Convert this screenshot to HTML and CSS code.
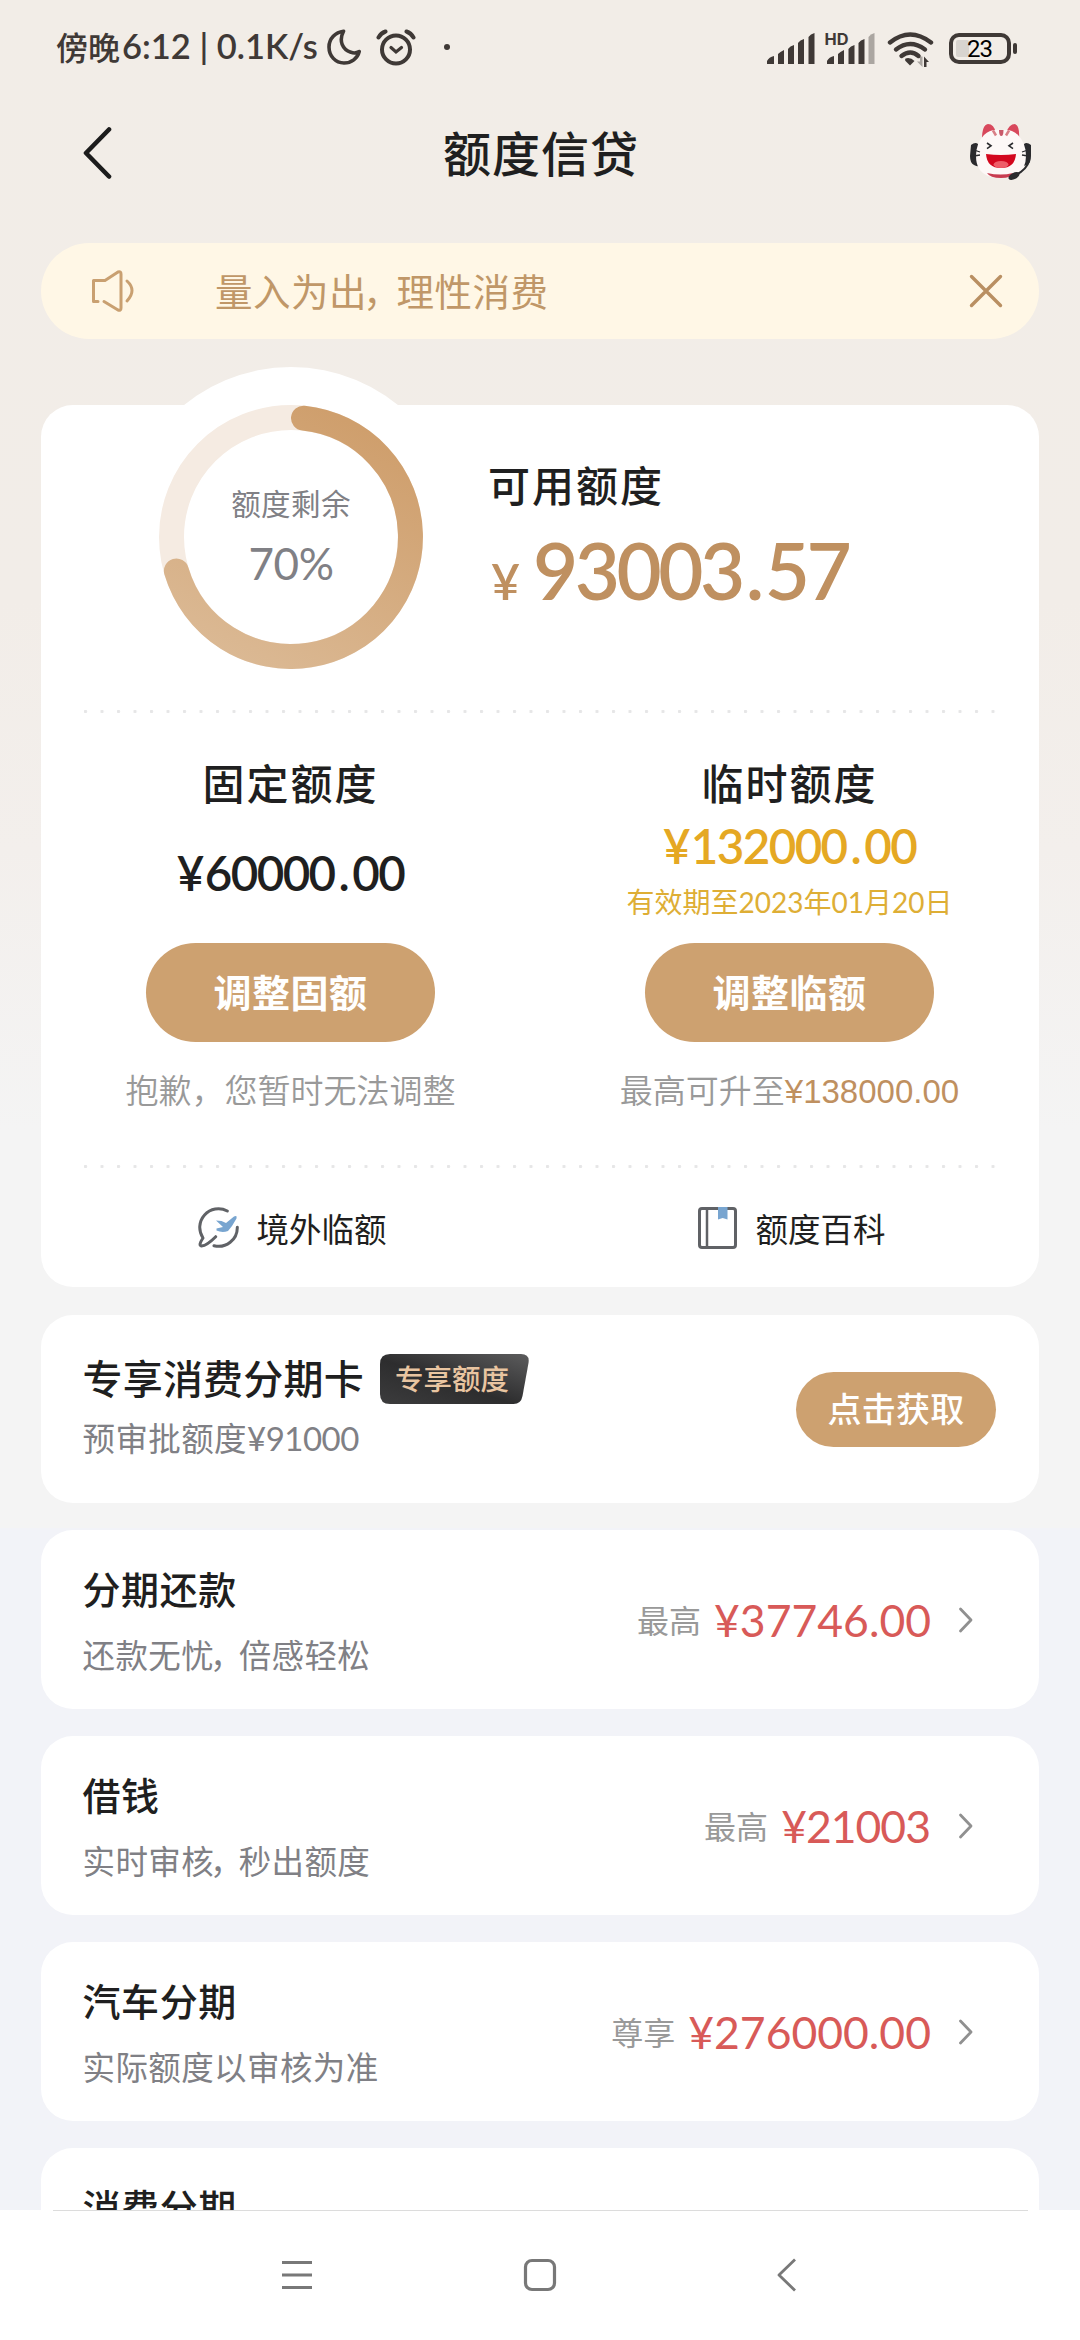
FILE: index.html
```html
<!DOCTYPE html>
<html lang="zh-CN">
<head>
<meta charset="utf-8">
<title>额度信贷</title>
<link rel="stylesheet" href="styles.css">
</head>
<body>
<div class="screen">
  <div class="statusbar">
    <span class="clock">傍晚<span class="lat">6:12 | 0.1K/s</span></span>
    <svg class="moon" width="34" height="36" viewBox="0 0 34 36"><path d="M16.500 2.200C8.500 3.200 2 9.600 2 18c0 9 6.500 16 15 16 7.400 0 13.600-4.600 15.200-11.400-3 1.700-6 1.700-8.400.6C15.500 20.500 11.500 12 16.500 2.200z" fill="none" stroke="#3f3936" stroke-width="3.600" stroke-linejoin="round"/></svg>
    <svg class="alarm" width="40" height="37" viewBox="0 0 40 37"><g fill="none" stroke="#3f3936" stroke-linecap="round"><circle cx="20" cy="20.500" r="14" stroke-width="4"/><path d="M2.500 8.500Q5 4 9.500 2.500M37.500 8.500Q35 4 30.500 2.500" stroke-width="4"/><path d="M15 18.500l5 4.500 5.500-4.500" stroke-width="3.200"/></g></svg>
    <span class="dot"></span>
    <svg class="signals" width="254" height="38" viewBox="0 0 254 38">
      <g fill="#3f3936">
        <path d="M0 34v-3q2-4 7-5v8zM11 34V24q2-2 6-4v14zM21 34V19q2-3 6-4v19zM31 34V13q2-3 6-4v25zM41.500 34V7q2-3 6-4v31z"/>
        <path d="M60 34v-3q2-4 7-5v8zM71 34V24q2-2 6-4v14zM81.500 34V19q2-3 6-4v19zM91.500 34V13q2-3 6-4v25z"/>
        <path d="M101.500 34V7q2-3 6-4v31z" fill="#aba6a1"/>
        <text x="57.500" y="14.500" class="hd" textLength="24" lengthAdjust="spacingAndGlyphs">HD</text>
        <path d="M138.500 28.500q5-1.500 9 2.500l-4.500 4.500-4.500-4.500q-1-1 0-2.500z"/>
        <path d="M157 37V26.500l5 5.500h-2.500v5z"/>
        <path d="M155.500 26.500V37l-5.500-5.500h3v-5z" fill="#aba6a1"/>
      </g>
      <g fill="none" stroke="#3f3936" stroke-width="4.400" stroke-linecap="round"><path d="M123 12.500q20-16 41 0"/><path d="M129 19.500q14-11 29 0"/><path d="M134.500 26q9-7 17 0"/></g>
      <rect x="189" y="10" width="13" height="17" rx="2" fill="#d8d4cf"/>
      <rect x="184" y="5" width="58" height="27" rx="8" fill="none" stroke="#3f3936" stroke-width="4"/>
      <rect x="246" y="13" width="4" height="11" rx="2" fill="#3f3936"/>
      <text x="200" y="26.500" class="pct" textLength="26">23</text>
    </svg>
  </div>

  <header class="topbar">
    <svg width="30" height="52" viewBox="0 0 30 52"><path d="M26 2.500L3 26l23 23.500" fill="none" stroke="#1c1c1c" stroke-width="4.600" stroke-linecap="round" stroke-linejoin="round"/></svg>
    <h1>额度信贷</h1>
    <svg class="mascot" width="64" height="58" viewBox="0 0 64 58">
      <path d="M2 22q6-5 9 2v13q2 9-6 5-4-2-4-9zM62 22q-6-5-9 2v13q-1 8 5 5 4-2 4-9z" fill="#2b2b2e"/>
      <path d="M13 16Q13 2 19 1q6 0 8 9zM37 10q3-9 9-9 5 2 4 15z" fill="#d8485c"/>
      <path d="M32 7q11-1 17 5 8 8 8 21 0 15-12 20-13 4-26 0Q7 48 7 33q0-13 8-21 6-6 17-5z" fill="#fdf8f7"/>
      <path d="M24 7.500l3 5M40 7.500l-3 5" stroke="#d97f86" stroke-width="2.500"/><path d="M30 7h4.500q0 6-2.200 6T30 7z" fill="#c9596a"/>
      <path d="M18 20l4 2.800-4 2.800M44 20l-4 2.800 4 2.800" fill="none" stroke="#2b2b2e" stroke-width="1.600"/>
      <path d="M5 27l6 2M5 33l6-1M59 27l-6 2M59 33l-6-1" stroke="#2b2b2e" stroke-width="1.300"/>
      <path d="M17 31q15 2 30 0-1 14-15 14T17 31z" fill="#d3071e"/><ellipse cx="32" cy="41.500" rx="7.500" ry="3.500" fill="#ee5d68"/>
      <path d="M18 50q14 3 26 0-1 5-12 5t-14-5z" fill="#c83c50"/>
      <path d="M60 38q-2 8-13 14" fill="none" stroke="#2b2b2e" stroke-width="2"/><ellipse cx="45" cy="53" rx="6" ry="3.200" transform="rotate(-28 45 53)" fill="#2b2b2e"/>
    </svg>
  </header>

  <div class="notice">
    <svg width="46" height="44" viewBox="0 0 46 44"><g fill="none" stroke="#c9a071" stroke-width="3" stroke-linecap="round" stroke-linejoin="round"><path d="M8 32.500H3.500V11.500H15L28 3Q31 2 31 5v34q0 3-3 2L14 32.500"/><path d="M37 12q10 9 0 20"/></g></svg>
    <p>量入为出<span class="comma">，</span>理性消费</p>
    <svg width="34" height="34" viewBox="0 0 34 34"><path d="M2.500 2.500l29 29M31.500 2.500l-29 29" stroke="#b98f62" stroke-width="3.400" stroke-linecap="round"/></svg>
  </div>

  <section class="card main">
    <div class="overview">
      <div class="gauge">
        <svg width="264" height="264" viewBox="0 0 264 264">
          <defs><linearGradient id="ring" x1="0.700" y1="0" x2="0.200" y2="1"><stop offset="0" stop-color="#cf9f6d"/><stop offset="1" stop-color="#dbb994"/></linearGradient></defs>
          <circle cx="132" cy="132" r="119.500" fill="none" stroke="#f5ebe2" stroke-width="25"/>
          <path d="M144.500 13.150A119.500 119.500 0 1 1 17.400 166" fill="none" stroke="url(#ring)" stroke-width="25" stroke-linecap="round"/>
        </svg>
        <div class="gauge-text"><span class="g-label">额度剩余</span><span class="g-value">70%</span></div>
      </div>
      <div class="available">
        <h2>可用额度</h2>
        <p class="big"><span class="yen">¥</span>93003<span class="pt">.</span>57</p>
      </div>
    </div>
    <div class="dots"></div>
    <div class="limits">
      <div class="col">
        <h2>固定额度</h2>
        <p class="sum fixed"><span class="y">¥</span>60000<span class="pt">.</span>00</p>
        <button>调整固额</button>
        <p class="hint">抱歉，您暂时无法调整</p>
      </div>
      <div class="col">
        <h2>临时额度</h2>
        <p class="sum temp"><span class="y">¥</span>132000<span class="pt">.</span>00</p>
        <p class="until">有效期至2023年01月20日</p>
        <button>调整临额</button>
        <p class="hint">最高可升至<span class="cap">¥138000.00</span></p>
      </div>
    </div>
    <div class="dots"></div>
    <div class="links">
      <a><svg width="42" height="44" viewBox="0 0 42 44"><path d="M29.300 5A18.700 18.700 0 0 0 5 32Q0 39.500 3.500 40 9 39.500 17.700 30.700M39.300 21.300A18.700 18.700 0 0 1 16 39.700" fill="none" stroke="#606266" stroke-width="3" stroke-linecap="round" stroke-linejoin="round"/><path d="M18 14.500l5.500.5 4.500 2 8-6.500q3.500-1.500 2.500 2L34 20l-4 5q-6 2-11.500-.5v-2l6.500-1.500z" fill="#78a5d0"/></svg>境外临额</a>
      <a><svg width="42" height="44" viewBox="0 0 42 44"><rect x="2.500" y="2.500" width="36" height="39" rx="2.500" fill="none" stroke="#606266" stroke-width="3"/><path d="M10 2v40" stroke="#606266" stroke-width="2.500"/><path d="M21 1h9.500v12.500L25.700 12 21 13.500z" fill="#78a5d0"/></svg>额度百科</a>
    </div>
  </section>

  <section class="card promo">
    <div class="info">
      <div class="line"><h3>专享消费分期卡</h3>
        <span class="badge"><svg width="149" height="50" viewBox="0 0 149 50"><defs><linearGradient id="bg" x1="0" y1="1" x2="1" y2="0"><stop offset="0" stop-color="#3c3c3d"/><stop offset=".45" stop-color="#2d2d2e"/><stop offset="1" stop-color="#5c5c5d"/></linearGradient></defs><path d="M10 0H141q9 0 7.500 9l-6 33q-1.500 8-9 8H10Q0 50 0 40V10Q0 0 10 0z" fill="url(#bg)"/></svg><span class="badge-text">专享额度</span></span>
      </div>
      <p class="sub">预审批额度<span class="lat">¥91000</span></p>
    </div>
    <button class="small">点击获取</button>
  </section>

  <section class="card row">
    <div class="info"><h3>分期还款</h3><p class="sub">还款无忧<span class="comma">，</span>倍感轻松</p></div>
    <div class="offer"><span class="tag">最高</span><span class="amt">¥37746.00</span><svg width="16" height="28" viewBox="0 0 16 28"><path d="M2.500 3L13 14 2.500 25" fill="none" stroke="#909090" stroke-width="2.800" stroke-linecap="round" stroke-linejoin="round"/></svg></div>
  </section>
  <section class="card row">
    <div class="info"><h3>借钱</h3><p class="sub">实时审核<span class="comma">，</span>秒出额度</p></div>
    <div class="offer"><span class="tag">最高</span><span class="amt tight">¥21003</span><svg width="16" height="28" viewBox="0 0 16 28"><path d="M2.500 3L13 14 2.500 25" fill="none" stroke="#909090" stroke-width="2.800" stroke-linecap="round" stroke-linejoin="round"/></svg></div>
  </section>
  <section class="card row">
    <div class="info"><h3>汽车分期</h3><p class="sub">实际额度以审核为准</p></div>
    <div class="offer"><span class="tag">尊享</span><span class="amt">¥276000.00</span><svg width="16" height="28" viewBox="0 0 16 28"><path d="M2.500 3L13 14 2.500 25" fill="none" stroke="#909090" stroke-width="2.800" stroke-linecap="round" stroke-linejoin="round"/></svg></div>
  </section>
  <section class="card row">
    <div class="info"><h3>消费分期</h3></div>
  </section>

  <nav class="navbar">
    <svg width="34" height="36" viewBox="0 0 34 36"><path d="M2 5.500h30M2 18h30M2 30.500h30" stroke="#787878" stroke-width="3"/></svg>
    <svg width="34" height="36" viewBox="0 0 34 36"><rect x="2.500" y="3.500" width="29" height="29" rx="6.500" fill="none" stroke="#787878" stroke-width="3.200"/></svg>
    <svg width="34" height="36" viewBox="0 0 34 36"><path d="M29 2.500L13 18l16 15.500" fill="none" stroke="#787878" stroke-width="2.800" stroke-linejoin="round"/></svg>
  </nav>
</div>
</body>
</html>
```
FILE: styles.css
```css
* { box-sizing: border-box; margin: 0; padding: 0; }
body { width: 1080px; height: 2340px; overflow: hidden; font-family: Lato, "Noto Sans CJK SC", sans-serif; color: #1f1f20; }
svg { display: block; flex: none; }
h1, h2, h3 { font-weight: 500; font-family: "Noto Sans CJK SC", sans-serif; }

.screen {
  display: flex; flex-direction: column; width: 1080px; height: 2340px; overflow: hidden; position: relative;
  background: linear-gradient(#f2ede7 0, #f2ede8 600px, #f3efec 850px, #f4f4f4 1130px, #f4f4f4 1528px, #f2f3f8 1528px);
}

.statusbar { height: 94px; flex: none; display: flex; align-items: center; padding: 0 59px 0 56px; color: #3f3936; }
.clock { font: 500 32px/36px "Noto Sans CJK SC", sans-serif; width: 271px; white-space: nowrap; display: flex; align-items: center; padding-bottom: 2px; }
.clock .lat { font: 600 34.500px/36px Lato, sans-serif; letter-spacing: 0; margin-left: 2px; white-space: pre; }
.alarm { margin-left: 15px; }
.statusbar .dot { width: 6px; height: 6px; border-radius: 50%; background: #3f3936; margin-left: 28px; }
.signals { margin-left: auto; margin-top: 3px; }
.hd { font: 700 16px Inter, sans-serif; }
.pct { font: 400 24px Roboto, sans-serif; }

.topbar { height: 118px; flex: none; display: flex; justify-content: space-between; align-items: center; padding: 0 47px 0 83px; }
.topbar h1 { font-size: 48px; line-height: 60px; letter-spacing: 1px; padding-bottom: 4px; }
.mascot { margin-top: -3px; }

.notice { height: 96px; flex: none; margin: 31px 41px 0; padding: 0 36px 0 49px; border-radius: 48px; background: #fff7e6; display: flex; align-items: center; }
.notice p { flex: 1; margin-left: 79px; padding-bottom: 2px; font: 400 37.500px/50px "Noto Sans CJK SC", sans-serif; letter-spacing: .5px; color: #c09768; }
.comma { margin-left: -4px; letter-spacing: -4px; }

.card { margin: 27px 41px 0; border-radius: 32px; background: #fff; flex: none; }
.main { margin-top: 66px; height: 882px; padding: 0 43px; }
.overview { height: 305px; display: flex; }
.gauge { position: relative; width: 264px; height: 264px; margin-left: 75px; isolation: isolate; }
.gauge::before { content: ""; position: absolute; z-index: -1; left: -38px; top: -38px; width: 340px; height: 340px; border-radius: 50%; background: #fff; }
.gauge-text { position: absolute; inset: 0; display: flex; flex-direction: column; align-items: center; color: #808085; }
.g-label { margin-top: 75px; font: 400 29.500px/44px "Noto Sans CJK SC", sans-serif; letter-spacing: .4px; }
.g-value { margin-top: 12px; font: 400 44px/54px Lato, sans-serif; letter-spacing: -.5px; }
.available { margin-left: 65px; padding-top: 49px; }
h2 { font-size: 42px; line-height: 60px; letter-spacing: 2px; }
.big { margin: 11px 0 0 3px; font: 600 78px/90px Lato, sans-serif; letter-spacing: -3.500px; color: #bf9060; white-space: nowrap; }
.big .yen { font-size: 50px; margin-right: 13px; letter-spacing: 0; }
.pt { margin: 0 4px; }

.dots { height: 3px; background: radial-gradient(circle at 1.500px 1.500px, #e6e6e7 1.300px, transparent 2px) 0 0 / 16.500px 3px repeat-x; }
.limits { display: flex; height: 452px; margin: 0 -43px; }
.col { flex: 1; display: flex; flex-direction: column; align-items: center; padding-top: 39px; }
.sum { font: 600 47.500px/56px Lato, sans-serif; letter-spacing: -1.600px; white-space: nowrap; }
.sum .y { margin-right: 2px; }
.fixed { margin: 33px 0 42px; }
.temp { margin-top: 6px; color: #e5a823; }
.until { font: 400 28px/36px Lato, "Noto Sans CJK SC", sans-serif; color: #deae35; margin: 10px 0 23px; }
button { width: 289px; height: 99px; flex: none; border: 0; padding-bottom: 3px; border-radius: 50px; background: #cda170; color: #fff; font: 700 38px/50px "Noto Sans CJK SC", sans-serif; letter-spacing: .5px; }
.hint { margin-top: 23px; font: 350 33px/48px "Noto Sans CJK SC", sans-serif; color: #999; white-space: nowrap; }
.cap { font-family: "Liberation Sans", sans-serif; color: #bf9060; font-weight: 400; }
.links { display: flex; margin: 0 -43px; padding-bottom: 2px; height: 121px; align-items: center; }
.links a { flex: 1; display: flex; align-items: center; justify-content: center; gap: 16px; padding-left: 4px; font: 400 32.500px/44px "Noto Sans CJK SC", sans-serif; }

.promo, .row { display: flex; justify-content: space-between; padding: 0 43px 0 41.500px; }
.promo { margin-top: 28px; height: 188px; align-items: center; }
.promo .info { align-self: flex-start; padding-top: 36px; }
.line { display: flex; align-items: center; gap: 16px; margin-bottom: 8px; }
.promo h3 { font-size: 40px; line-height: 53px; letter-spacing: .2px; padding-bottom: 3px; }
.badge { position: relative; }
.badge-text { position: absolute; left: 15px; top: 4px; font: 500 28.500px/40px "Noto Sans CJK SC", sans-serif; color: #e9c5a1; white-space: nowrap; }
.sub { font: 400 32.500px/44px "Noto Sans CJK SC", sans-serif; letter-spacing: .4px; color: #808085; }
.sub .lat { font-family: Lato, sans-serif; font-size: 33px; letter-spacing: -.5px; }
.small { width: 200px; height: 75px; font-size: 34px; font-weight: 500; letter-spacing: .3px; }
.row { height: 179px; }
.row .info { padding-top: 33px; }
.row h3 { font-size: 38px; line-height: 50px; letter-spacing: .6px; }
.row .sub { margin-top: 19px; }
.offer { display: flex; align-items: center; padding-right: 22px; }
.tag { font: 400 32px/44px "Noto Sans CJK SC", sans-serif; color: #999; margin-right: 13px; padding-bottom: 2px; }
.amt { font: 400 44.500px/54px Lato, sans-serif; color: #d85a58; margin-right: 27px; }
.tight { letter-spacing: -1px; margin-right: 28px; }

.navbar { position: absolute; left: 0; right: 0; bottom: 0; height: 130px; background: #fff; display: flex; justify-content: center; gap: 209px; padding-top: 47px; }
.navbar::before { content: ""; position: absolute; left: 53px; right: 52px; top: 0; height: 1px; background: #dcdcdc; }
```
